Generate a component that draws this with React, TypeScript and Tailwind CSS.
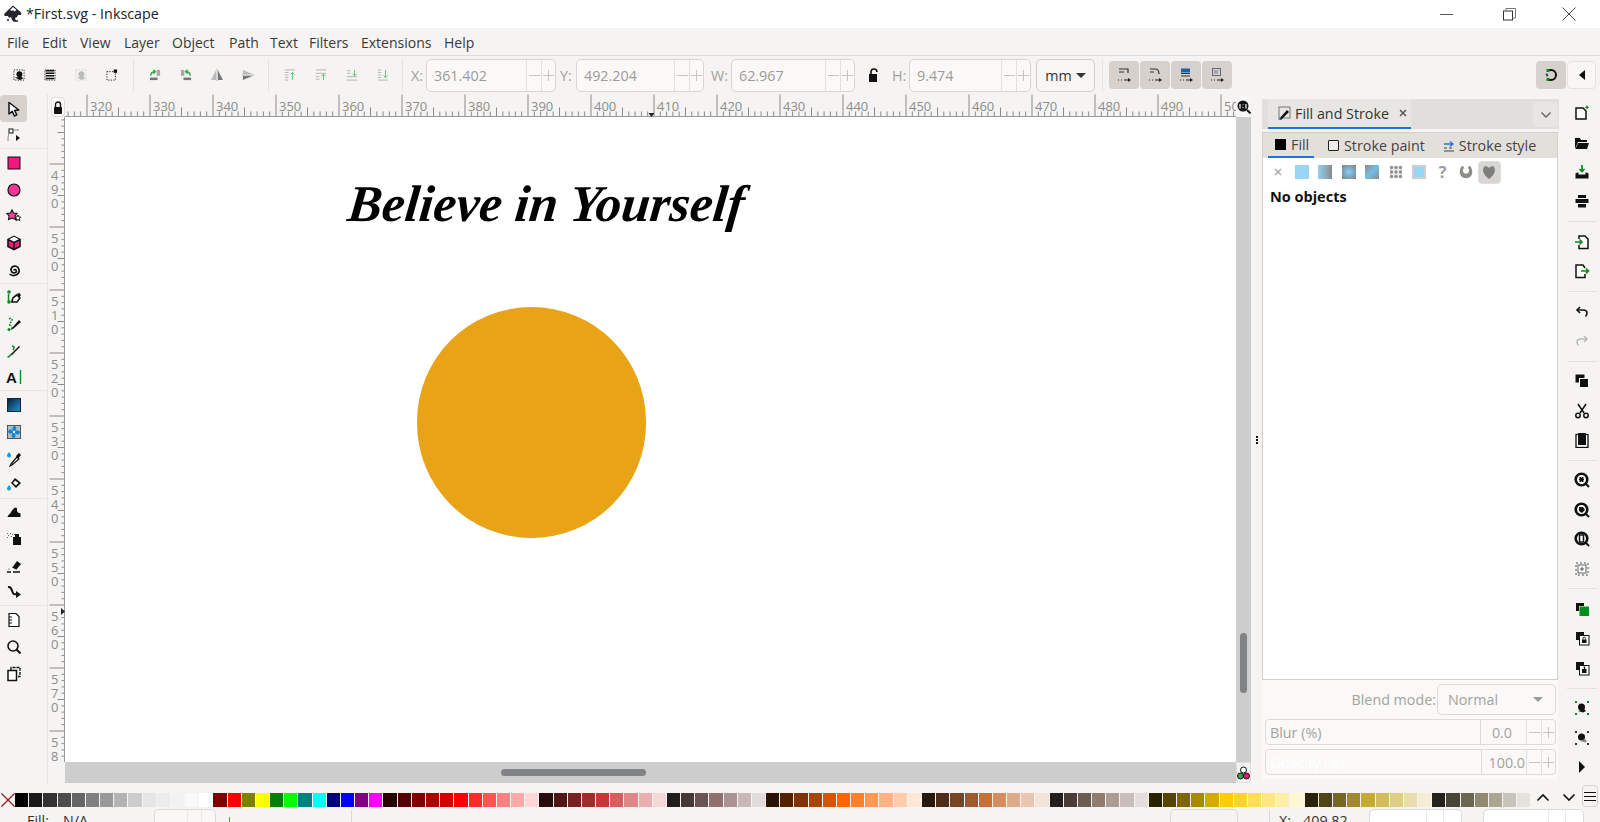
import React from "react";

type P = { children?: React.ReactNode; s?: number };
const I = ({ children, s = 16 }: P) => (
  <svg width={s} height={s} viewBox="0 0 16 16" fill="none" className="shrink-0">
    {children}
  </svg>
);
const G = "#0a8a1e";
const K = "#111";

const tools: React.ReactNode[] = [
  <I><path d="M3 1.500v11.500l3.200-2.600 2.200 4.600 2.400-1.200-2.200-4.400 4.200-.4z" fill="#fff" stroke={K} strokeWidth="1.500" strokeLinejoin="round" /></I>,
  <I><rect x="3" y="2" width="4" height="4" fill="#fff" stroke={K} /><path d="M7 3h6M3 6c-1 3-1 5-1 8" stroke="#888" /><path d="M10 8v6l4-3z" fill={K} /></I>,
  <I><rect x="2" y="2" width="12" height="12" fill="#f5167e" stroke={K} /></I>,
  <I><circle cx="8" cy="8" r="6" fill="#f5349a" stroke={K} strokeWidth="1.200" /></I>,
  <I><path d="M6 2l1.500 3 3.500.5-2 2.500.6 3.500-3.400-1.500L2.500 11.500l.6-3.500L1 5.500 4.500 5z" fill="#f0479b" stroke={K} strokeWidth="1.100" /><path d="M12 7l.9 1.900 2 .3-1.400 1.400.3 2-1.800-1-1.800 1 .3-2L9 9.200l2-.3z" fill="#fff" stroke={K} /></I>,
  <I><path d="M8 1.500l6 3v7l-6 3-6-3v-7z" fill="#f5167e" stroke={K} strokeWidth="1.600" /><path d="M8 1.800l5.400 2.700L8 7.200 2.600 4.500z" fill="#fff" /><path d="M2 4.500l6 3 6-3M8 7.500v7" stroke={K} strokeWidth="1.400" /></I>,
  <I><path d="M8 8.500c0-1.500 2.500-1 2.300.8-.2 2-4 2.500-5-.3C4.200 6 7 3.500 10 4.300c3 .9 4 4.500 2.300 7-1.800 2.700-6.300 3-8.600.7" stroke={K} strokeWidth="1.700" /></I>,
  <I><path d="M2.500 5v7" stroke={G} strokeWidth="1.500" /><circle cx="3" cy="3" r="1.800" fill={G} /><circle cx="3" cy="13" r="1.800" fill={G} /><path d="M5 13c1-5 4-8 9-9" stroke="#888" /><path d="M6 13l1-4 4-3 3 3-3 4z" fill="#fff" stroke={K} strokeWidth="1.500" /><path d="M11 6l2-2 2 2-2 3z" fill={K} /></I>,
  <I><path d="M3 3c3-2 4 1 2 3s-2 4 1 4" stroke={G} strokeWidth="1.500" strokeDasharray="2 1" /><circle cx="3" cy="13.500" r="1.500" fill={G} /><path d="M6 12l7-8 2 2-8 7-2 1z" fill={K} /><path d="M5 13l1-2 1 1z" fill="#fff" stroke={K} strokeWidth=".5" /></I>,
  <I><path d="M1.500 14c3-.5 3-3 5-3M6 3c3 0 2 3 1 4" stroke={G} strokeWidth="1.500" /><path d="M5 11l8-8 1 1-8 8z" fill={K} /></I>,
  <I><text x="0" y="14" fontFamily="Liberation Sans" fontWeight="700" fontSize="15" fill={K}>A</text><path d="M14.500 1v14" stroke={G} strokeWidth="1.400" /></I>,
  <I><defs><linearGradient id="g1" x1="0" y1="0" x2="1" y2="1"><stop offset="0" stopColor="#061a3a" /><stop offset="1" stopColor="#1a9ad8" /></linearGradient></defs><rect x="1.500" y="1.500" width="13" height="13" fill="url(#g1)" stroke="#222" /></I>,
  <I><rect x="1.500" y="1.500" width="13" height="13" fill="#b4bec6" stroke="#555" /><path d="M8 8C6 6 6 3 8 2c2 0 3 2 2 4zM8 8c2-2 5-2 6 0 0 2-2 3-4 2zM8 8c2 2 2 5 0 6-2 0-3-2-2-4zM8 8c-2 2-5 2-6 0 0-2 2-3 4-2z" fill="#0d86d4" /><circle cx="8" cy="8" r="1.200" fill="#fff" /></I>,
  <I><path d="M3 1c1.500 2 2 2.500 2 3.500a2 2 0 01-4 0C1 3.500 2 2.500 3 1z" fill="#159be0" /><path d="M5 13l6-7 2 2-7 6-2 1z" fill="#fff" stroke={K} strokeWidth="1.200" /><path d="M10 5l3-3 2 2-3 4z" fill={K} /></I>,
  <I><path d="M3 8c1.500 2 2 2.500 2 3.500a2 2 0 01-4 0c0-1 1-2 2-3.500z" fill="#159be0" /><path d="M9 1l6 5-5 5-5-5z" fill={K} /><path d="M9 3.500L12.500 6 10 8.500 7 6z" fill="#fff" /></I>,
  <I><path d="M1.500 13c.5-2 2-2.500 3-4 1.500-2.500 3-5 5-5.500 2 0 1.500 2 1.500 3.500.5 1.500 2 2 3.500 2.500V13z" fill={K} /></I>,
  <I><path d="M1 2h1v1H1zm3 0h1v1H4zM2 4h1v1H2zm3 1h1v1H5zM1 6h1v1H1zm7-3h1v1H8zM6 3h1v1H6z" fill="#666" /><path d="M9 3h4v3H9z" fill={K} /><rect x="7" y="6" width="8" height="8" fill={K} /></I>,
  <I><path d="M6 10l5-7 4 3-5 6z" fill={K} /><path d="M6 10l4 2" stroke="#fff" /><path d="M1 14h4M7 14h7" stroke={K} strokeWidth="1.300" /><circle cx="3" cy="11" r=".6" fill={K} /></I>,
  <I><path d="M2 3c5-1 3 6 6 7l4 .5" stroke={K} strokeWidth="2" /><path d="M10 7l5 3.500-5 3.500z" fill={K} /></I>,
  <I><path d="M3 1.500h7l3 3V14.500H3z" fill="#fff" stroke={K} strokeWidth="1.200" /><path d="M3 5h3M3 8h3M3 11h3" stroke={K} /></I>,
  <I><circle cx="7" cy="7" r="5" stroke={K} strokeWidth="1.600" /><path d="M10.500 10.500l4 4" stroke={K} strokeWidth="2" /></I>,
  <I><path d="M5 4V1.500h9v9h-2" stroke={K} strokeWidth="1.300" strokeDasharray="3 1" /><rect x="2" y="4.500" width="8.500" height="10" fill="#fff" stroke={K} strokeWidth="1.500" /></I>,
];
const toolBreaks = new Set([1, 6, 10, 14, 18]);

const DotBox = ({ children }: P) => <I><rect x="2" y="2" width="12" height="12" stroke={K} strokeDasharray="1.500 1.500" />{children}</I>;
const cmd1: React.ReactNode[] = [
  <DotBox><circle cx="8.500" cy="7" r="3.500" fill={K} /><path d="M3 11l6 3 4-2-2-2z" fill={K} /></DotBox>,
  <I><path d="M3 3h10M3 6h10M3 9h10M3 12h10" stroke={K} strokeWidth="1.800" /><rect x="2" y="2" width="12" height="12" stroke={K} strokeDasharray="1.500 1.500" /></I>,
  <I><rect x="2" y="2" width="12" height="12" stroke="#ccc" strokeDasharray="1.500 1.500" /><circle cx="8.500" cy="7" r="3.500" fill="#bbb" /><path d="M3 11l6 3 4-2-2-2z" fill="#bbb" /></I>,
  <I><rect x="2" y="4" width="10" height="10" stroke={K} strokeDasharray="1.500 1.500" /><rect x="10" y="1.500" width="4" height="4" fill={K} /></I>,
];
const cmd2: React.ReactNode[] = [
  <I><rect x="2" y="11" width="9" height="3" fill="#777" /><rect x="10" y="2" width="4" height="7" fill="#aaa" /><path d="M3 9c0-3 1-5 5-5M6 1.800L8.500 4 6 6.500" stroke="#2fae46" strokeWidth="1.600" /></I>,
  <I><rect x="5" y="11" width="9" height="3" fill="#777" /><rect x="2" y="2" width="4" height="7" fill="#aaa" /><path d="M13 9c0-3-1-5-5-5M10 1.800L7.500 4 10 6.500" stroke="#2fae46" strokeWidth="1.600" /></I>,
  <I><path d="M7 2v12H1z" fill="#bbb" /><path d="M9 2v12h6z" fill="#777" /><path d="M8 1v14" stroke="#999" strokeDasharray="1.500 1" /></I>,
  <I><path d="M2 2l12 5H2z" fill="#bbb" /><path d="M2 14l12-5H2z" fill="#777" /><path d="M1 8h14" stroke="#999" strokeDasharray="1.500 1" /></I>,
];
const Al = ({ a, d }: { a: string; d: string }) => (
  <I><path d={d} stroke="#aaa" /><path d={a} stroke="#5cc274" strokeWidth="1.100" /></I>
);
const cmd3: React.ReactNode[] = [
  <Al d="M2 2h12M2 5h4M2 8h4M2 11h4M2 14h4" a="M11 14V5M8.500 7.500L11 5l2.500 2.500" />,
  <Al d="M2 2h12M2 6h12M2 10h4M2 13h4" a="M11 14V7M8.500 9.500L11 7l2.500 2.500" />,
  <Al d="M2 14h12M2 10h12M2 6h4M2 3h4" a="M11 2v7M8.500 6.500L11 9l2.500-2.500" />,
  <Al d="M2 14h12M2 11h4M2 8h4M2 5h4M2 2h4" a="M11 2v9M8.500 8.500L11 11l2.500-2.500" />,
];

const Spin = () => (
  <div className="flex h-full shrink-0">
    <span className="w-[15px] flex items-center justify-center border-l border-[#e2e0dd]"><span className="w-[11px] h-px bg-[#c4c4c4]" /></span>
    <span className="w-[14px] flex items-center justify-center border-l border-[#e2e0dd] relative"><span className="w-[11px] h-px bg-[#c4c4c4]" /><span className="absolute w-px h-[11px] bg-[#c4c4c4]" /></span>
  </div>
);
const Field = ({ v, w }: { v: string; w: string }) => (
  <div className={`${w} h-[33px] flex items-center justify-between rounded-[5px] border border-[#d8d6d2] bg-[#faf9f8] pl-[7px] text-[14.3px] text-[#9b9b9b]`}>
    <span>{v}</span>
    <Spin />
  </div>
);
const Lbl = ({ t, c }: { t: string; c: string }) => <span className={`${c} text-[14.3px] text-[#a0a0a0]`}>{t}</span>;
const Btn = ({ n }: { n: React.ReactNode }) => <div className="w-[31px] h-[30px] flex items-center justify-center"><div className="scale-[0.85] flex">{n}</div></div>;
const VSep = ({ c }: { c: string }) => <div className={`${c} w-px h-[33px] bg-[#e6e4e1]`} />;

const Layout = ({ kind }: { kind: number }) => (
  <I>
    {kind === 0 && <path d="M3 2h9v4M3 5h5" stroke="#333" strokeWidth="1.200" />}
    {kind === 1 && <path d="M3 2h5c3 0 4 2 4 5M3 5h4" stroke="#333" strokeWidth="1.200" />}
    {kind === 2 && <><rect x="3" y="1.500" width="9" height="4" fill="#1463b4" /><path d="M3 6.500h9M3 9h9" stroke="#333" /></>}
    {kind === 3 && <><rect x="3.500" y="1.500" width="8" height="7" stroke="#667" /><text x="4.500" y="6.500" fontSize="5" fill="#567">W</text></>}
    <path d="M2 13h1M5 13h1M8 13h4" stroke="#222" strokeWidth="1.200" />
    <path d="M12 11l3 2-3 2z" fill="#222" />
  </I>
);

const Toolbar = () => (
  <div className="h-[39px] flex items-center bg-[#f5f4f2]">
    <div className="flex ml-[3px]">{cmd1.map((n, i) => <Btn key={i} n={n} />)}</div>
    <VSep c="ml-[6px]" />
    <div className="flex ml-[5px]">{cmd2.map((n, i) => <Btn key={i} n={n} />)}</div>
    <VSep c="ml-[5px]" />
    <div className="flex ml-[5px]">{cmd3.map((n, i) => <Btn key={i} n={n} />)}</div>
    <VSep c="ml-[4px]" />
    <Lbl t="X:" c="ml-[8px] w-[15px]" />
    <Field v="361.402" w="w-[130px]" />
    <Lbl t="Y:" c="ml-[4px] w-[16px]" />
    <Field v="492.204" w="w-[128px]" />
    <Lbl t="W:" c="ml-[7px] w-[20px]" />
    <Field v="62.967" w="w-[124px]" />
    <div className="w-[37px] flex justify-center">
      <I><path d="M5 7V5a3 3 0 016 0" stroke={K} strokeWidth="1.600" /><rect x="3" y="7" width="8" height="8" fill={K} /></I>
    </div>
    <Lbl t="H:" c="w-[17px]" />
    <Field v="9.474" w="w-[122px]" />
    <div className="ml-[5px] w-[59px] h-[33px] flex items-center justify-center gap-1 rounded-[5px] border border-[#d0cdc9] bg-[#f7f6f4] text-[14.3px] text-[#333]">
      mm<span className="w-0 h-0 border-x-[5px] border-x-transparent border-t-[5px] border-t-[#333]" />
    </div>
    <VSep c="ml-[7px]" />
    <div className="ml-[6px] flex gap-[1.500px]">
      {[0, 1, 2, 3].map((k) => (
        <div key={k} className="w-[29.500px] h-[28px] rounded-[4px] bg-[#d6d1cc] flex items-center justify-center"><Layout kind={k} /></div>
      ))}
    </div>
    <div className="flex-1" />
    <div className="w-[30px] h-[28px] rounded-[4px] bg-[#d6d1cc] flex items-center justify-center">
      <I><path d="M6 3h2a5 5 0 010 10H6" stroke={K} strokeWidth="2" /><rect x="3.500" y="2" width="3" height="3" fill={G} /><rect x="3.500" y="11" width="3" height="3" fill={G} /><path d="M4 6.500L3 8l2 0-1 1.500" stroke={K} /></I>
    </div>
    <div className="ml-px mr-[4px] w-[29px] h-[28px] rounded-[4px] border border-[#e4e2df] bg-[#f8f7f6] flex items-center justify-center">
      <span className="w-0 h-0 border-y-[5px] border-y-transparent border-r-[6px] border-r-[#111]" />
    </div>
  </div>
);

const HRuler = () => {
  const X0 = 22;
  const items = [];
  for (let v = 317; v <= 507; v++) {
    const x = X0 + (v - 320) * 6.3;
    const h = v % 10 === 0 ? 22 : v % 5 === 0 ? 9 : 5;
    items.push(<path key={v} d={`M${x} 22.500V${22.500 - h}`} stroke="#8a8a8a" strokeWidth="1" />);
    if (v % 10 === 0) items.push(<text key={`t${v}`} x={x + 3} y={17} fontSize="13" fill="#8c8c8c" fontFamily="Open Sans, sans-serif">{v}</text>);
  }
  return (
    <svg width="1171" height="23" className="block">
      {items}
      <path d="M0 22.500H1171" stroke="#9a9a9a" />
      <path d="M583.500 19h6l-3 4z" fill="#222" />
    </svg>
  );
};

const VRuler = () => {
  const Y0 = 47;
  const items = [];
  for (let v = 483; v <= 585; v++) {
    const y = Y0 + (v - 490) * 6.3;
    const w = v % 10 === 0 ? 15 : v % 5 === 0 ? 7 : 3;
    items.push(<path key={v} d={`M16.500 ${y}H${16.500 - w}`} stroke="#8a8a8a" />);
    if (v % 10 === 0) {
      String(v).split("").forEach((d, i) => {
        items.push(<text key={`d${v}${i}`} x={3} y={y + 16 + i * 14} fontSize="13" fill="#8c8c8c" fontFamily="Open Sans, sans-serif">{d}</text>);
      });
    }
  }
  return (
    <svg width="17" height="645" className="block">
      {items}
      <path d="M16.500 0V645" stroke="#9a9a9a" />
      <path d="M13 491l4 3.500-4 3.500z" fill="#222" />
    </svg>
  );
};

const Canvas = () => (
  <div className="relative flex-1 bg-white overflow-hidden">
    <div className="absolute left-[283px] top-[52px] whitespace-nowrap text-[51.500px] leading-[70px] font-bold italic text-black font-['Liberation_Serif',serif] -skew-x-6">
      Believe in Yourself
    </div>
    <div className="absolute left-[352px] top-[190px] w-[229px] h-[231px] rounded-full bg-[#e8a317]" />
  </div>
);

const Center = () => (
  <div className="w-[1203px] flex flex-col">
    <div className="h-[23px] flex relative">
      <div className="w-[17px] relative">
        <div className="absolute left-[3px] top-[3px] w-[14px] h-[20px] rounded-[4px] bg-[#faf9f8] border border-[#dedcd9] flex items-center justify-center">
          <svg width="10" height="13" viewBox="0 0 10 13"><path d="M2.500 6V3.500a2.500 2.500 0 015 0V6" stroke="#111" strokeWidth="1.400" fill="none" /><rect x="1" y="6" width="8" height="7" rx="1" fill="#111" /></svg>
        </div>
      </div>
      <div className="flex-1 overflow-hidden"><HRuler /></div>
      <div className="w-[15px] h-[21px] mt-[2px] rounded-[4px] bg-[#f8f7f6] flex items-center justify-center absolute right-0">
        <svg width="14" height="14" viewBox="0 0 14 14"><circle cx="6" cy="6" r="5.500" fill="#111" /><path d="M10 10l3.500 3.500" stroke="#111" strokeWidth="2" /><path d="M3 4v4.500M9 4v4.500M6 4.500v.8M6 7v.8" stroke="#fff" strokeWidth="1.200" /></svg>
      </div>
    </div>
    <div className="h-[645px] flex">
      <div className="w-[17px]"><VRuler /></div>
      <Canvas />
      <div className="w-[15px] bg-[#cdcdcd] relative">
        <div className="absolute left-[4px] top-[516px] w-[7px] h-[60px] rounded-full bg-[#7f8383]" />
      </div>
    </div>
    <div className="h-[21px] flex">
      <div className="w-[17px]" />
      <div className="flex-1 bg-[#cdcdcd] relative">
        <div className="absolute left-[436px] top-[7px] w-[145px] h-[7px] rounded-full bg-[#7f8383]" />
      </div>
      <div className="w-[15px] rounded-b-[4px] bg-[#f3f2f0] border border-[#e0dedb] flex items-center justify-center">
        <svg width="13" height="14" viewBox="0 0 13 14"><circle cx="6.500" cy="4" r="3" fill="#fff" stroke="#111" /><circle cx="3.500" cy="10" r="3" fill="#2fa84a" stroke="#111" /><circle cx="9.500" cy="10" r="3" fill="#f0187e" stroke="#111" /></svg>
      </div>
    </div>
  </div>
);

const paints: React.ReactNode[] = [
  <svg width="14" height="14" viewBox="0 0 14 14"><path d="M4 4l6 6M10 4l-6 6" stroke="#aaa" strokeWidth="1.500" /></svg>,
  <div className="w-[14px] h-[14px] bg-[#98d5f5]" />,
  <div className="w-[14px] h-[14px] bg-gradient-to-r from-[#8fd3f8] to-[#8a8a8a]" />,
  <div className="w-[14px] h-[14px] bg-[radial-gradient(circle,#7fd0fa,#808080)]" />,
  <div className="w-[14px] h-[14px] bg-gradient-to-br from-[#8a8a8a] via-[#6fbde8] to-[#8a8a8a]" />,
  <svg width="14" height="14" viewBox="0 0 14 14"><rect x="1" y="1" width="12" height="12" fill="#efefef" /><g fill="#8f8f8f"><circle cx="2.500" cy="2.500" r="1.700" /><circle cx="7" cy="2.500" r="1.700" /><circle cx="11.500" cy="2.500" r="1.700" /><circle cx="2.500" cy="7" r="1.700" /><circle cx="7" cy="7" r="1.700" /><circle cx="11.500" cy="7" r="1.700" /><circle cx="2.500" cy="11.500" r="1.700" /><circle cx="7" cy="11.500" r="1.700" /><circle cx="11.500" cy="11.500" r="1.700" /></g></svg>,
  <div className="w-[14px] h-[14px] border-2 border-[#cfcfcf] bg-[#98d5f5]" />,
  <span className="w-[14px] text-center text-[16px] leading-[14px] font-bold text-[#9a9a9a]">?</span>,
  <svg width="14" height="14" viewBox="0 0 14 14"><path d="M3 1C0 4 0 10 3 12c2 1.500 6 1.500 8 0 3-2 3-8 0-11-1.500 0-2 1-2 2 1 1 2 3 0 5-1 1-3 1-4 0-2-2-1-4 0-5 0-1-.5-2-2-2z" fill="#8a8d88" /></svg>,
];

const Panel = () => (
  <div className="w-[297px] flex flex-col pt-[5px]">
    <div className="h-[30px] bg-[#e1dedb] flex relative shrink-0">
      <div className="ml-[6px] w-[143px] h-[30px] border-b-[2px] border-[#1a73e8] bg-[#e8e6e3] flex items-center gap-[3px] pl-[10px] text-[14.3px] text-[#333]">
        <svg width="14" height="15" viewBox="0 0 14 15"><rect x="1" y="1" width="11" height="11" stroke="#777" fill="none" /><path d="M1 13l8-9 2 2-8 8z" fill="#111" /><path d="M0 14l2-3 1 2z" fill="#1a8ae8" /></svg>
        <span>Fill and Stroke</span>
        <svg className="ml-[7px]" width="8" height="8" viewBox="0 0 8 8"><path d="M1 1l6 6M7 1l-6 6" stroke="#555" strokeWidth="1.500" /></svg>
      </div>
      <div className="absolute right-[1px] top-[3px] w-[25px] h-[25px] rounded-[4px] bg-[#e8e6e3] flex items-center justify-center">
        <svg width="12" height="8" viewBox="0 0 12 8"><path d="M1.500 1.500L6 6l4.500-4.500" stroke="#666" strokeWidth="1.400" fill="none" /></svg>
      </div>
    </div>
    <div className="h-[3px] shrink-0" />
    <div className="h-[548px] w-[296px] flex flex-col border border-[#d3cfcb] bg-white shrink-0">
      <div className="h-[25px] bg-[#e3e0dc] flex items-center text-[14.3px] text-[#444] shrink-0">
        <div className="ml-[5px] w-[46px] h-[25px] border-b-[2px] border-[#1a73e8] flex items-center pl-[7px] gap-[5px]">
          <span className="w-[11px] h-[11px] bg-black" /><span>Fill</span>
        </div>
        <span className="ml-[14px] w-[11px] h-[11px] border-[1.500px] border-[#222] bg-[#eee] rounded-[1px]" />
        <span className="ml-[5px]">Stroke paint</span>
        <svg className="ml-[18px]" width="12" height="12" viewBox="0 0 12 12"><path d="M1 4h8M7 1.500L10 4 7 6.500" stroke="#1a73e8" strokeWidth="1.300" fill="none" /><path d="M1 8h3M6 8h3M1 11h10" stroke="#444" /></svg>
        <span className="ml-[4px]">Stroke style</span>
      </div>
      <div className="h-[28px] flex items-center pl-[8px] gap-[9.500px] shrink-0">
        {paints.map((n, i) => <span key={i} className="w-[14px] flex justify-center">{n}</span>)}
        <span className="w-[23px] h-[23px] -ml-[5px] rounded-[4px] bg-[#d8d6d3] border border-[#e0dedb] flex items-center justify-center">
          <svg width="14" height="14" viewBox="0 0 14 14"><path d="M3 1C0 3 0 9 7 14c7-5 7-11 4-13-2 0-3 1-4 2-1-1-2-2-4-2z" fill="#7d7f7a" /></svg>
        </span>
      </div>
      <div className="pl-[7px] pt-[1px] text-[14.5px] leading-[20px] font-bold text-[#111]">No objects</div>
    </div>
    <div className="h-[99px] w-[296px] bg-[#faf9f7] shrink-0 flex flex-col text-[14.3px] text-[#a3a3a3]">
      <div className="mt-[4px] h-[31px] flex justify-end items-center pr-[2px]">
        <span>Blend mode:</span>
        <div className="w-[119px] h-[31px] ml-px rounded-[5px] border border-[#dedbd7] flex items-center justify-between px-[10px]">
          <span>Normal</span>
          <span className="w-0 h-0 mr-[2px] border-x-[5px] border-x-transparent border-t-[5px] border-t-[#999]" />
        </div>
      </div>
      <div className="mt-[4px] ml-[3px] w-[291px] h-[26px] flex items-center rounded-[4px] border border-[#dedbd7]">
        <span className="w-[217px] pl-[4px]">Blur (%)</span>
        <div className="w-[46px] h-full border-l border-[#dedbd7] flex items-center justify-end pr-[14px]">0.0</div>
        <Spin />
      </div>
      <div className="mt-[4px] ml-[3px] w-[291px] h-[26px] flex items-center rounded-[4px] border border-[#dedbd7]">
        <span className="w-[217px] pl-[4px] text-white">Opacity (%)</span>
        <div className="w-[46px] h-full border-l border-[#dedbd7] flex items-center justify-end pr-[1px]">100.0</div>
        <Spin />
      </div>
    </div>
  </div>
);

const ZoomI = ({ children }: P) => <I><circle cx="7.500" cy="7.500" r="5.800" stroke={K} strokeWidth="2.600" fill="#fff" /><path d="M11.500 11.500l3.500 3.500" stroke={K} strokeWidth="2" />{children}</I>;
const Stack = ({ children }: P) => <I><path d="M2 2h8v3H5v5H2z" fill={K} /><rect x="5.500" y="5.500" width="9.500" height="9.500" fill="#fff" stroke={K} />{children}</I>;

const rights: (React.ReactNode | null)[] = [
  <I><path d="M2 3h7l3 3v8H2z" fill="#fff" stroke={K} strokeWidth="1.500" /><path d="M13 0l.9 1.700 1.700.6-1.700.7-.9 1.700-.8-1.700-1.700-.7 1.700-.6z" fill={G} /></I>,
  <I><path d="M1 3h5l1 2h6v2H4l-3 7z" fill={K} /><path d="M4 8h11l-2 6H1.500z" fill={K} /></I>,
  <I><path d="M8 1v6M5.500 5L8 7.500 10.500 5" stroke={G} strokeWidth="1.700" /><path d="M1.500 9.500l2-1h1v2h7v-2h1l2 1V14.500h-13z" fill={K} /></I>,
  <I><rect x="4" y="2" width="8" height="3" fill={K} /><rect x="1.500" y="6" width="13" height="4" fill={K} /><rect x="4" y="11" width="8" height="3.500" fill={K} /></I>,
  null,
  <I><path d="M5 5V2h6l3 3v9.500H5V11" stroke={K} strokeWidth="1.500" fill="#fff" /><path d="M1 8h7M5.500 5.500L8 8l-2.500 2.500" stroke={G} strokeWidth="1.600" /></I>,
  <I><path d="M11 5L9 2H2v12.500h9V11" stroke={K} strokeWidth="1.500" fill="#fff" /><path d="M7 8h7.500M12 5.500L14.500 8 12 10.500" stroke={G} strokeWidth="1.600" /></I>,
  null,
  <I><path d="M6 3L3 6l3 3" stroke={K} strokeWidth="1.600" /><path d="M3 6h6c3 0 4 1.500 4 3 0 1.500-.5 2.500-1.500 3.500" stroke={K} strokeWidth="1.600" /></I>,
  <I><path d="M10 3l3 3-3 3" stroke="#b8b8b8" strokeWidth="1.500" /><path d="M13 6H7C4 6 3 7.500 3 9c0 1.500.5 2.500 1.500 3.500" stroke="#b8b8b8" strokeWidth="1.500" /></I>,
  null,
  <I><rect x="1.500" y="1.500" width="9" height="8" fill={K} /><rect x="5.500" y="5.500" width="9" height="9" fill={K} stroke="#fff" /></I>,
  <I><path d="M4 1l6 9M12 1L6 10" stroke={K} strokeWidth="1.500" /><circle cx="4" cy="12.500" r="2.200" stroke={K} strokeWidth="1.500" /><circle cx="12" cy="12.500" r="2.200" stroke={K} strokeWidth="1.500" /></I>,
  <I><rect x="2" y="2.500" width="12" height="13" fill="#fff" stroke={K} strokeWidth="1.300" /><rect x="4" y="1" width="8" height="12" fill={K} /></I>,
  null,
  <ZoomI><path d="M5 5h5v5H5z" fill={K} stroke="#fff" strokeDasharray="1 1" /></ZoomI>,
  <ZoomI><path d="M5 5h4l2 3-3 3-3-2z" fill={K} /></ZoomI>,
  <ZoomI><rect x="5.500" y="4" width="4" height="7" fill="#fff" stroke={K} strokeWidth="1.500" /></ZoomI>,
  <I><rect x="2" y="2" width="12" height="12" stroke="#555" strokeDasharray="2 2" /><rect x="4" y="4" width="8" height="8" fill="#fff" stroke="#666" /><path d="M6 8h4M8 6v4" stroke="#555" /></I>,
  null,
  <I><path d="M2 2h8v3H5v5H2z" fill={K} /><rect x="5.500" y="5.500" width="9.500" height="9.500" fill={G} /></I>,
  <Stack><rect x="8" y="9.500" width="4.500" height="3.500" fill={K} /><path d="M9 9.500V8.500a1.200 1.200 0 012.500 0v1" stroke={K} /></Stack>,
  <Stack><rect x="8" y="9" width="4.500" height="4" fill={K} /><path d="M10.500 6.500v3" stroke={K} strokeWidth="1.500" /></Stack>,
  null,
  <I><path d="M1 1h2v2H1zM13 1h2v2h-2zM1 13h2v2H1zM13 13h2v2h-2z" fill={G} /><circle cx="7.500" cy="7" r="3.500" fill={K} /><path d="M4 11l5 1.500 3-1.500-2-2z" fill={K} /></I>,
  <I><path d="M1 1h2v2H1zM13 1h2v2h-2zM1 13h2v2H1zM13 13h2v2h-2z" fill="#333" /><circle cx="7.500" cy="7" r="3.500" fill={K} /><path d="M6 11l5 1.500 2-1.500-2-2z" fill="#888" /></I>,
  <svg width="8" height="12" viewBox="0 0 8 12"><path d="M1 0l6 6-6 6z" fill="#111" /></svg>,
];

const RightBar = () => (
  <div className="w-[41px] flex flex-col items-center pt-[4px] pl-[5px]">
    {rights.map((n, i) =>
      n === null ? (
        <div key={i} className="h-[11px] w-[30px] flex items-center"><div className="h-px w-full bg-[#e3e1de]" /></div>
      ) : (
        <div key={i} className="h-[29.400px] flex items-center justify-center">{n}</div>
      )
    )}
  </div>
);

const colors = "000000 1a1a1a 333333 4d4d4d 666666 808080 999999 b3b3b3 cccccc e6e6e6 ececec f2f2f2 f9f9f9 ffffff 800000 ff0000 808000 ffff00 008000 00ff00 008080 00ffff 000080 0000ff 800080 ff00ff 2b0000 550000 800000 aa0000 d40000 ff0000 ff2a2a ff5555 ff8080 ffaaaa ffd5d5 280b0b 501616 782121 a02c2c c83737 d35f5f de8787 e9afaf f4d7d7 241c1c 483737 6c5353 916f6f ac9393 c8b7b7 e3dbdb 2b1100 552200 803300 aa4400 d45500 ff6600 ff7f2a ff9955 ffb380 ffccaa ffe6d5 28170b 502d16 784421 a05a2c c87137 d38d5f deaa87 e9c6af f4e3d7 241f1c 483e37 6c5d53 917c6f ac9d93 c8beb7 e3dedb 2b2200 554400 806600 aa8800 d4aa00 ffcc00 ffd42a ffdd55 ffe680 ffeeaa fff6d5 28220b 504416 786721 a0892c c8ab37 d3bc5f decd87 e9ddaf f4eed7 24221c 484537 6c6753 918a6f aca793 c8c4b7 e3e2db".split(" ");

const Palette = () => (
  <div className="h-[23px] flex pl-px bg-[#f5f4f2] relative">
    <div className="mt-[8px] w-[14px] h-[14px] shrink-0">
      <svg width="14" height="14" viewBox="0 0 14 14"><path d="M.5.5l13 13M13.500.5l-13 13" stroke="#8a2020" strokeWidth="1.300" /></svg>
    </div>
    <div className="mt-[8px] w-[1515px] h-[14px] flex gap-px">
      {colors.map((c, i) => <div key={i} className="flex-1" style={{ backgroundColor: `#${c}` }} />)}
    </div>
    <div className="ml-[6px] mt-[3px] flex items-center h-[18px] gap-[12px]">
      <svg width="14" height="9" viewBox="0 0 14 9"><path d="M1.500 7.500L7 2l5.500 5.500" stroke="#111" strokeWidth="1.600" fill="none" /></svg>
      <svg width="14" height="9" viewBox="0 0 14 9"><path d="M1.500 1.500L7 7l5.500-5.500" stroke="#111" strokeWidth="1.600" fill="none" /></svg>
    </div>
    <div className="absolute right-[2px] top-0 w-[16px] h-[22px] rounded-[4px] border border-[#d5d3d0] flex flex-col items-center justify-center gap-[2.500px]">
      <span className="w-[12px] h-[1.500px] bg-[#111]" /><span className="w-[12px] h-[1.500px] bg-[#111]" /><span className="w-[12px] h-[1.500px] bg-[#111]" />
    </div>
  </div>
);

const SBox = ({ c }: { c: string }) => (
  <div className={`${c} h-[20px] rounded-t-[5px] border border-[#dcdad7] bg-white flex justify-end`}>
    <span className="w-[17px] border-l border-[#eceae8]" /><span className="w-[18px] border-l border-[#eceae8]" />
  </div>
);

const Status = () => (
  <div className="h-[14px] overflow-hidden flex items-start bg-[#f5f4f2] text-[14.3px] leading-[20px] text-[#333]">
    <span className="ml-[27px] mt-[3px]">Fill:</span>
    <span className="ml-[14px] mt-[3px]">N/A</span>
    <div className="ml-[66px] mt-[1px] w-[62px] h-[20px] rounded-t-[5px] border border-[#dcdad7] bg-[#f9f8f7] flex justify-end"><span className="w-[14px] border-l border-[#eceae8]" /><span className="w-[14px] border-l border-[#eceae8]" /></div>
    <span className="ml-[13px] mt-[9px] w-px h-[5px] bg-[#5b87c7]" />
    <span className="ml-[121px] mt-[2px] w-px h-[12px] bg-[#dcdad7]" />
    <div className="ml-[818px] mt-[1px] w-[68px] h-[20px] rounded-t-[5px] border border-[#dcdad7] bg-[#f5f4f2]" />
    <span className="ml-[31px] mt-[2px] w-px h-[12px] bg-[#dcdad7]" />
    <span className="ml-[9px] mt-[3px]">X:</span>
    <span className="ml-[12px] mt-[3px]">409.82</span>
    <SBox c="ml-[21px] mt-[1px] w-[93px]" />
    <SBox c="ml-[21px] mt-[1px] w-[101px]" />
  </div>
);

export default function App() {
  return (
    <div className="w-[1600px] h-[822px] overflow-hidden flex flex-col bg-[#f5f4f2] font-['Open_Sans',sans-serif]">
      <div className="h-[28px] bg-white flex items-center relative shrink-0">
        <svg className="ml-[3px]" width="20" height="20" viewBox="0 0 20 20">
          <path d="M10 1.500L2 9c-1.500 1.500-1 3 .5 3H5l1 2 2-1 1 3 2 2 2-1-1-3 2-1 1-2h2c1.500 0 2-1.500.5-3z" fill="#23262b" />
          <path d="M10 3L7 6l2 1 1-1 1.500 1.500L13.500 6z" fill="#fff" />
          <path d="M12 17h3M4 16h2" stroke="#23262b" strokeWidth="1.500" />
        </svg>
        <span className="ml-[3px] text-[14.3px] text-[#222]">*First.svg - Inkscape</span>
        <div className="ml-auto flex items-center">
          <span className="w-[13px] h-px bg-[#555]" />
          <svg className="ml-[50px]" width="13" height="13" viewBox="0 0 13 13"><rect x=".5" y="3" width="9" height="9" stroke="#333" fill="none" /><path d="M3 3V.5h9.500V10H9.500" stroke="#777" fill="none" /></svg>
          <svg className="ml-[46px] mr-[24px]" width="14" height="14" viewBox="0 0 14 14"><path d="M.5.5l13 13M13.500.5l-13 13" stroke="#444" /></svg>
        </div>
      </div>
      <div className="h-[28px] pt-[2px] border-b border-[#dedcd9] flex items-center text-[14px] text-[#3a3a3a] shrink-0">
        <span className="ml-[7px] w-[35px]">File</span>
        <span className="w-[38px]">Edit</span>
        <span className="w-[44px]">View</span>
        <span className="w-[48px]">Layer</span>
        <span className="w-[57px]">Object</span>
        <span className="w-[41px]">Path</span>
        <span className="w-[39px]">Text</span>
        <span className="w-[52px]">Filters</span>
        <span className="w-[83px]">Extensions</span>
        <span>Help</span>
      </div>
      <Toolbar />
      <div className="h-[691px] flex shrink-0">
        <div className="w-[48px] border-r border-[#e6e4e1] flex flex-col pt-px shrink-0">
          {tools.map((n, i) => (
            <div key={i} className={`h-[26.900px] w-[47px] flex items-center justify-center ${toolBreaks.has(i) ? "border-b border-[#e8e6e3]" : ""}`}>
              {i === 0 ? <div className="w-[27px] h-[27px] rounded-[4px] bg-[#d6d1cc] flex items-center justify-center -ml-[20px]">{n}</div> : <div className="-ml-[20px]">{n}</div>}
            </div>
          ))}
        </div>
        <Center />
        <div className="w-[11px] flex flex-col items-center justify-center gap-px shrink-0">
          <span className="w-[2px] h-[2px] bg-[#111]" /><span className="w-[2px] h-[2px] bg-[#111]" /><span className="w-[2px] h-[2px] bg-[#111]" />
        </div>
        <Panel />
        <RightBar />
      </div>
      <Palette />
      <Status />
    </div>
  );
}
